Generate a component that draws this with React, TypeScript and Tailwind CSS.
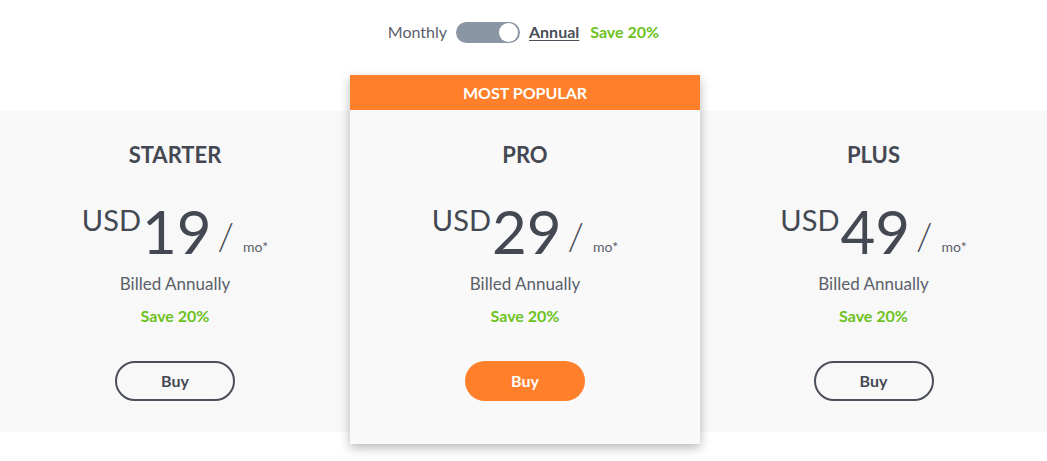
import React, { useState } from 'react';

type Plan = {
  name: string;
  price: number;
  popular?: boolean;
};

const PLANS: Plan[] = [
  { name: 'STARTER', price: 19 },
  { name: 'PRO', price: 29, popular: true },
  { name: 'PLUS', price: 49 },
];

function PlanBody({ plan }: { plan: Plan }) {
  return (
    <div className="flex flex-col items-center">
      <h2 className="mt-[29px] text-[22px] font-bold leading-[30px] text-[#434852]">{plan.name}</h2>
      <div className="mt-[30px] flex items-start text-[#434852]">
        <span className="mt-[5px] text-[29px] leading-[30px] font-normal">USD</span>
        <span className="ml-[1px] text-[60px] leading-[62px] font-normal">{plan.price}</span>
        <span className="ml-[6px] mt-[13px] text-[38px] leading-[44px] font-light">/</span>
        <span className="ml-[9px] mt-[37px] text-[14px] leading-[20px] text-[#5a5f6a]">mo*</span>
      </div>
      <p className="mt-[10px] text-[17px] leading-[24px] text-[#5a5f6a]">Billed Annually</p>
      <p className="mt-[8px] text-[16px] leading-[24px] font-bold text-[#6cc21c]">Save 20%</p>
      {plan.popular ? (
        <button className="mt-[33px] h-[40px] w-[120px] rounded-full bg-[#ff7f2a] text-[16px] font-bold text-white">
          Buy
        </button>
      ) : (
        <button className="mt-[33px] h-[40px] w-[120px] rounded-full border-2 border-[#4a4f5a] text-[16px] font-bold text-[#434852]">
          Buy
        </button>
      )}
    </div>
  );
}

export default function App() {
  const [annual, setAnnual] = useState(true);

  return (
    <div
      className="min-h-[461px] w-full bg-white"
      style={{ fontFamily: 'Lato, "Open Sans", sans-serif' }}
    >
      {/* billing toggle */}
      <div className="flex h-[64px] items-center justify-center">
        <span className="text-[16px] text-[#5a5f6a]">Monthly</span>
        <button
          onClick={() => setAnnual(!annual)}
          className={`ml-[9px] flex h-[21px] w-[64px] items-center rounded-full bg-[#8a96a3] px-[2px] ${
            annual ? 'justify-end' : 'justify-start'
          }`}
        >
          <span className="h-[19px] w-[19px] rounded-full bg-white" />
        </button>
        <span className="ml-[9px] text-[16px] font-bold text-[#4a4f5a] underline underline-offset-2">Annual</span>
        <span className="ml-[11px] text-[16px] font-bold text-[#6cc21c]">Save 20%</span>
      </div>

      {/* plans */}
      <div className="mt-[11px] flex items-start">
        {PLANS.map((plan, i) =>
          plan.popular ? (
            <div key={plan.name} className="relative z-10 w-[350px] shrink-0 shadow-[0_4px_10px_rgba(0,0,0,0.28)]">
              <div className="flex h-[35px] items-center justify-center pt-[1px] text-[16px] font-bold text-white bg-[#ff7f2a]">
                MOST POPULAR
              </div>
              <div className="h-[334px] bg-[#f9f9f9] pt-[1px]">
                <PlanBody plan={plan} />
              </div>
            </div>
          ) : (
            <div
              key={plan.name}
              className={`mt-[36px] h-[321px] bg-[#f8f8f8] ${i === 0 ? 'w-[350px] shrink-0' : 'flex-1'}`}
            >
              <PlanBody plan={plan} />
            </div>
          ),
        )}
      </div>
    </div>
  );
}
